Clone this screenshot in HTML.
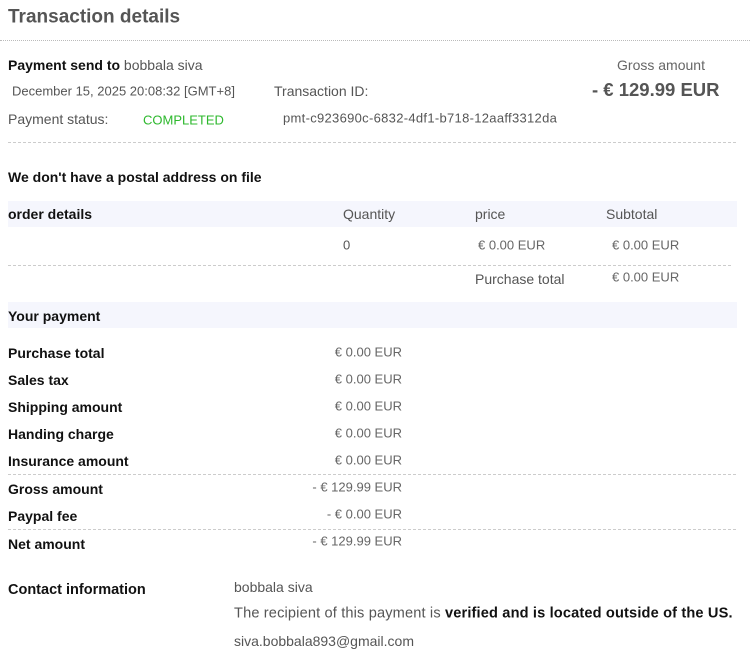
<!DOCTYPE html>
<html><head><meta charset="utf-8"><style>
body{margin:0;width:750px;height:659px;background:#fff;font-family:"Liberation Sans",sans-serif;color:#555;position:relative;overflow:hidden}
.a{position:absolute;white-space:nowrap;line-height:1;transform:translateY(-50%)}
.b{font-weight:bold;color:#111}
.s{font-size:14px}
.t{font-size:13px}
.v{font-size:13px;color:#666}
.hr{position:absolute;left:8px;width:728px;border-top:1px dashed #ccc;height:0}
.bar{position:absolute;left:8px;width:729px;background:#f5f6fd}
.r{text-align:right;transform:translate(-100%,-50%)}
</style></head><body>
<div class="a b" style="left:8px;top:17px;font-size:19px;color:#555">Transaction details</div>
<div style="position:absolute;left:0;top:40px;width:750px;border-top:1px dotted #bbb"></div>

<div class="a s" style="left:8px;top:65px"><span class="b">Payment send to</span> <span style="color:#555">bobbala siva</span></div>
<div class="a s" style="left:661px;top:65px;transform:translate(-50%,-50%);color:#666">Gross amount</div>
<div class="a t" style="left:12px;top:91px">December 15, 2025 20:08:32 [GMT+8]</div>
<div class="a s" style="left:274px;top:91px">Transaction ID:</div>
<div class="a b" style="left:592px;top:90px;font-size:18.5px;color:#555">- € 129.99 EUR</div>
<div class="a s" style="left:8px;top:119px">Payment status:</div>
<div class="a t" style="left:143px;top:120px;color:#2db82d">COMPLETED</div>
<div class="a t" style="left:283px;top:118px;letter-spacing:0.3px">pmt-c923690c-6832-4df1-b718-12aaff3312da</div>
<div class="hr" style="top:142px"></div>

<div class="a b s" style="left:8px;top:177px">We don't have a postal address on file</div>
<div class="bar" style="top:201px;height:26px"></div>
<div class="a b s" style="left:8px;top:214px">order details</div>
<div class="a s" style="left:343px;top:214px">Quantity</div>
<div class="a s" style="left:475px;top:214px">price</div>
<div class="a s" style="left:606px;top:214px">Subtotal</div>
<div class="a t" style="left:343px;top:245px">0</div>
<div class="a v" style="left:478px;top:245px">€ 0.00 EUR</div>
<div class="a v" style="left:612px;top:245px">€ 0.00 EUR</div>
<div class="hr" style="top:265px;width:723px"></div>
<div class="a s" style="left:475px;top:279px">Purchase total</div>
<div class="a v" style="left:612px;top:277px">€ 0.00 EUR</div>

<div class="bar" style="top:302px;height:26px"></div>
<div class="a b s" style="left:8px;top:316px">Your payment</div>

<div class="a b s" style="left:8px;top:353px">Purchase total</div><div class="a v r" style="left:402px;top:352px">€ 0.00 EUR</div>
<div class="a b s" style="left:8px;top:380px">Sales tax</div><div class="a v r" style="left:402px;top:379px">€ 0.00 EUR</div>
<div class="a b s" style="left:8px;top:407px">Shipping amount</div><div class="a v r" style="left:402px;top:406px">€ 0.00 EUR</div>
<div class="a b s" style="left:8px;top:434px">Handing charge</div><div class="a v r" style="left:402px;top:433px">€ 0.00 EUR</div>
<div class="a b s" style="left:8px;top:461px">Insurance amount</div><div class="a v r" style="left:402px;top:460px">€ 0.00 EUR</div>
<div class="hr" style="top:474px"></div>
<div class="a b s" style="left:8px;top:489px">Gross amount</div><div class="a v r" style="left:402px;top:487px">- € 129.99 EUR</div>
<div class="a b s" style="left:8px;top:516px">Paypal fee</div><div class="a v r" style="left:402px;top:514px">- € 0.00 EUR</div>
<div class="hr" style="top:529px"></div>
<div class="a b s" style="left:8px;top:544px">Net amount</div><div class="a v r" style="left:402px;top:541px">- € 129.99 EUR</div>

<div class="a b s" style="left:8px;top:590px;font-size:14.5px">Contact information</div>
<div class="a s" style="left:234px;top:587px">bobbala siva</div>
<div class="a s" style="left:234px;top:614px;font-size:14.6px;letter-spacing:0.15px">The recipient of this payment is <span class="b">verified and is located outside of the US.</span></div>
<div class="a s" style="left:234px;top:641px">siva.bobbala893@gmail.com</div>
</body></html>
